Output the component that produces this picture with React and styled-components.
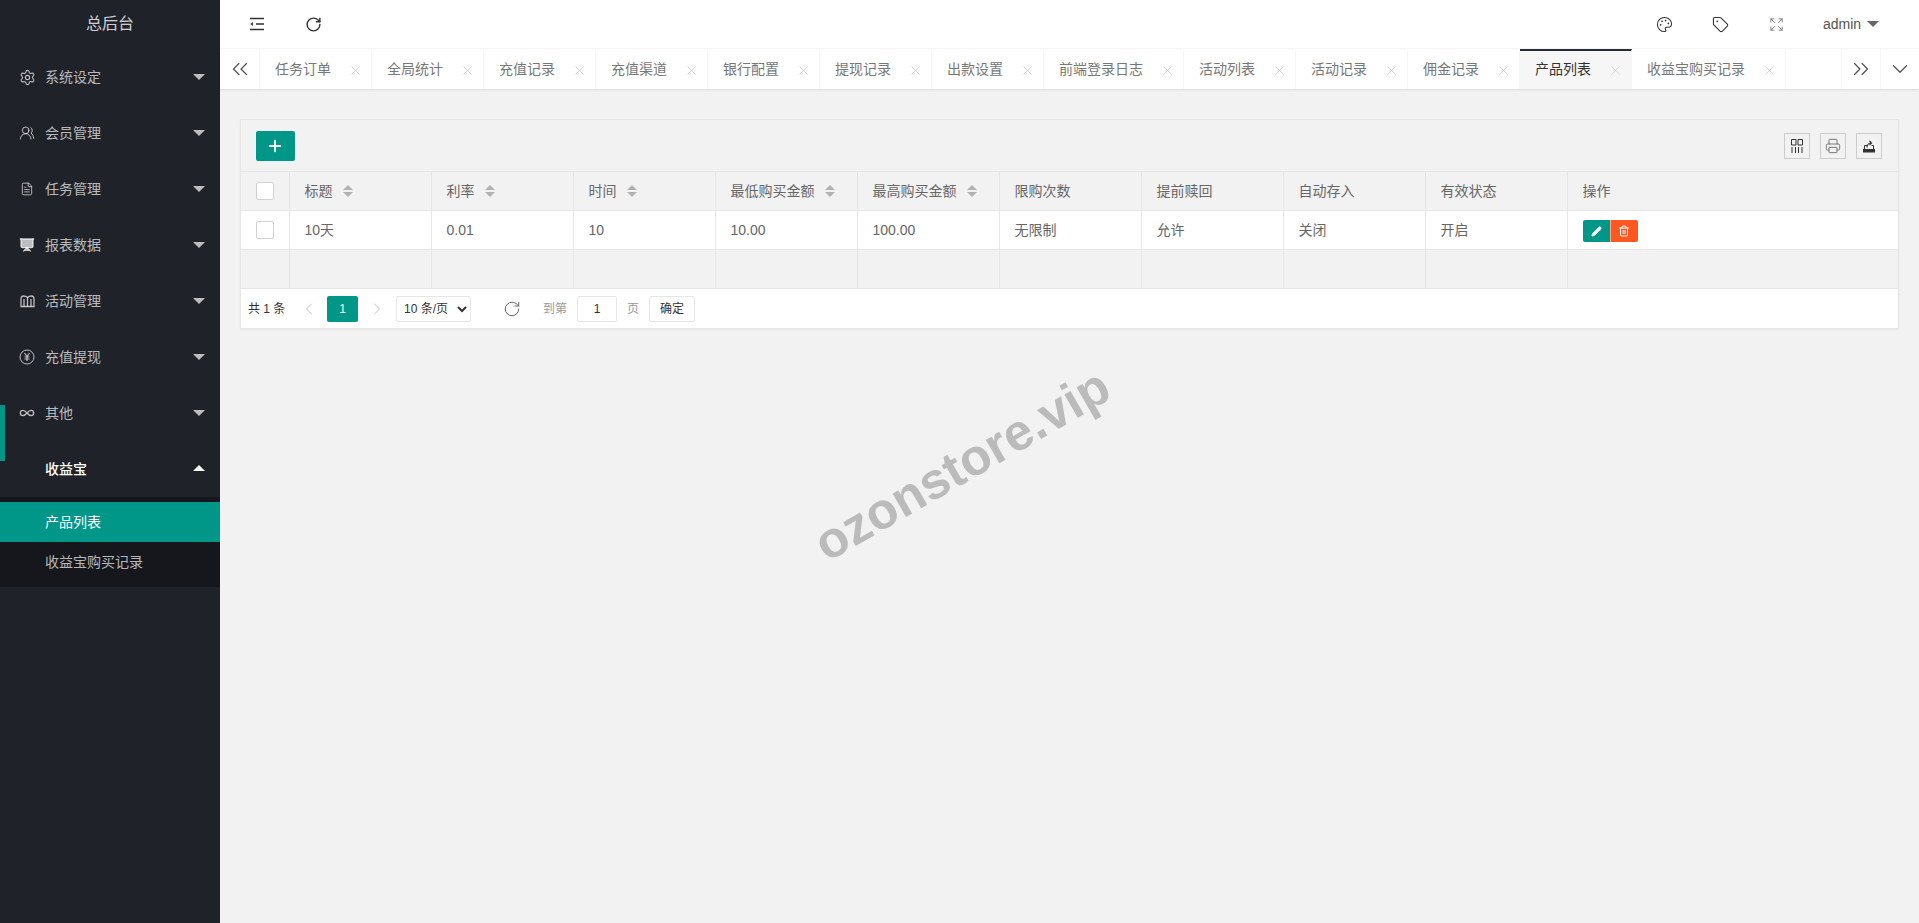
import React from "react";
import styled, { createGlobalStyle } from "styled-components";
import {
  ChevronDown,
  ChevronLeft,
  ChevronRight,
  ChevronsLeft,
  ChevronsRight,
  Expand,
  FileText,
  Infinity as InfinityIcon,
  Palette,
  Pencil,
  Plus,
  Presentation,
  Printer,
  RotateCw,
  Settings,
  Tag,
  Trash2,
  UsersRound,
  X,
} from "lucide-react";

const menus = [
  { label: "系统设定", icon: <Settings size={17} strokeWidth={1.6} /> },
  { label: "会员管理", icon: <UsersRound size={16} strokeWidth={1.5} /> },
  { label: "任务管理", icon: <FileText size={14} strokeWidth={1.6} /> },
  { label: "报表数据", icon: <Presentation size={16} strokeWidth={2} fill="currentColor" /> },
  { label: "活动管理", icon: <ReadIcon /> },
  { label: "充值提现", icon: <YenIcon /> },
  { label: "其他", icon: <InfinityIcon size={16} strokeWidth={2} />, marked: true },
];

const tabs = [
  "任务订单",
  "全局统计",
  "充值记录",
  "充值渠道",
  "银行配置",
  "提现记录",
  "出款设置",
  "前端登录日志",
  "活动列表",
  "活动记录",
  "佣金记录",
  "产品列表",
  "收益宝购买记录",
];

const columns = [
  { title: "标题", sort: true },
  { title: "利率", sort: true },
  { title: "时间", sort: true },
  { title: "最低购买金额", sort: true },
  { title: "最高购买金额", sort: true },
  { title: "限购次数" },
  { title: "提前赎回" },
  { title: "自动存入" },
  { title: "有效状态" },
];

const row = ["10天", "0.01", "10", "10.00", "100.00", "无限制", "允许", "关闭", "开启"];

function ReadIcon() {
  return (
    <svg width="15" height="13" viewBox="0 0 15 13" fill="none" stroke="currentColor" strokeWidth="1.3">
      <path d="M1 11.500V4c0-2 1-3 2.500-3s3 .5 4 1.500c1-1 2.500-1.500 4-1.500S14 2 14 4v7.500H1z" />
      <path d="M7.500 2.500v9M4 4v7.500M11 4v7.500" />
    </svg>
  );
}

function YenIcon() {
  return (
    <svg width="16" height="16" viewBox="0 0 16 16" fill="none" stroke="currentColor">
      <circle cx="8" cy="8" r="7" strokeWidth="1" />
      <path d="M5.500 4l2.500 3.500L10.500 4M8 7.500V12M5.500 8h5M5.500 10h5" strokeWidth="1.200" />
    </svg>
  );
}

function ColumnsIcon() {
  return (
    <svg width="14" height="14" viewBox="0 0 14 14" fill="none" stroke="#333" strokeWidth="1">
      <path d="M1.500 .5H6v5.500H1.500zM8 .5h4.500v5.500H8zM2 8v6M5.500 8v6M8.500 8v6M12 8v6" />
    </svg>
  );
}

function ExportIcon() {
  return (
    <svg width="14" height="14" viewBox="0 0 14 14">
      <path d="M1 10h12v3.500H1z" fill="#333" />
      <path d="M2.500 10V6.500H5M9.500 6.500h2V10" fill="none" stroke="#333" strokeWidth="1" />
      <path d="M5 8.500c0-2.500 1.500-4.500 4-4.500M7.500 2l2 2-2 2" fill="none" stroke="#333" strokeWidth="1.200" />
    </svg>
  );
}

function IndentIcon() {
  return (
    <svg width="16" height="14" viewBox="0 0 16 14" fill="none" stroke="#333" strokeWidth="1.300">
      <path d="M1 1.500h14M7 7h8M1 12.500h14" />
      <path d="M4 5v4L1.500 7z" fill="#333" stroke="none" />
    </svg>
  );
}

export default function App() {
  return (
    <Layout>
      <GlobalStyle />
      <Sidebar>
        <Logo>总后台</Logo>
        <nav>
          {menus.map((menu) => (
            <MenuItem key={menu.label} $marked={menu.marked}>
              <MenuIcon>{menu.icon}</MenuIcon>
              {menu.label}
              <Caret />
            </MenuItem>
          ))}
          <MenuItem $open>
            <MenuIcon />
            收益宝
            <Caret $up />
          </MenuItem>
          <SubMenu>
            <SubItem $active>产品列表</SubItem>
            <SubItem>收益宝购买记录</SubItem>
          </SubMenu>
        </nav>
      </Sidebar>

      <Main>
        <Header>
          <HeaderGroup>
            <HeaderButton>
              <IndentIcon />
            </HeaderButton>
            <HeaderButton>
              <RotateCw size={17} strokeWidth={2} />
            </HeaderButton>
          </HeaderGroup>
          <HeaderGroup>
            <HeaderButton>
              <Palette size={17} strokeWidth={1.5} />
            </HeaderButton>
            <HeaderButton>
              <Tag size={17} strokeWidth={1.5} />
            </HeaderButton>
            <HeaderButton $light>
              <Expand size={15} strokeWidth={1.5} />
            </HeaderButton>
            <UserName>
              admin
              <UserCaret />
            </UserName>
          </HeaderGroup>
        </Header>

        <TabBar>
          <TabArrow>
            <ChevronsLeft size={26} strokeWidth={1.2} />
          </TabArrow>
          <TabList>
            {tabs.map((tab) => (
              <Tab key={tab} $active={tab === "产品列表"}>
                {tab}
                <TabClose>
                  <X size={15} strokeWidth={1.2} />
                </TabClose>
              </Tab>
            ))}
          </TabList>
          <TabArrow $bordered>
            <ChevronsRight size={26} strokeWidth={1.2} />
          </TabArrow>
          <TabArrow $bordered>
            <ChevronDown size={26} strokeWidth={1.2} />
          </TabArrow>
        </TabBar>

        <Content>
          <Card>
            <Toolbar>
              <AddButton>
                <Plus size={18} strokeWidth={2.5} />
              </AddButton>
              <ToolGroup>
                <ToolButton>
                  <ColumnsIcon />
                </ToolButton>
                <ToolButton>
                  <Printer size={16} strokeWidth={1.5} />
                </ToolButton>
                <ToolButton>
                  <ExportIcon />
                </ToolButton>
              </ToolGroup>
            </Toolbar>

            <Table>
              <colgroup>
                <col width="48" />
                {columns.map((column) => (
                  <col key={column.title} width="142" />
                ))}
                <col />
              </colgroup>
              <thead>
                <tr>
                  <Th>
                    <CheckBox />
                  </Th>
                  {columns.map((column) => (
                    <Th key={column.title}>
                      <CellText>
                        {column.title}
                        {column.sort && <SortIcon />}
                      </CellText>
                    </Th>
                  ))}
                  <Th>
                    <CellText>操作</CellText>
                  </Th>
                </tr>
              </thead>
              <tbody>
                <BodyRow>
                  <Td>
                    <CheckBox />
                  </Td>
                  {row.map((value) => (
                    <Td key={value}>
                      <CellText>{value}</CellText>
                    </Td>
                  ))}
                  <Td>
                    <CellText>
                      <ActionButton $color="#009688">
                        <Pencil size={11} strokeWidth={2} fill="currentColor" />
                      </ActionButton>
                      <ActionButton $color="#ff5722">
                        <Trash2 size={12} strokeWidth={2} />
                      </ActionButton>
                    </CellText>
                  </Td>
                </BodyRow>
                <tr>
                  {Array.from({ length: 11 }, (_, i) => (
                    <Td key={i} />
                  ))}
                </tr>
              </tbody>
            </Table>

            <Pager>
              <PagerText>共 1 条</PagerText>
              <PagerArrow>
                <ChevronLeft size={20} strokeWidth={1.2} />
              </PagerArrow>
              <PageNumber>1</PageNumber>
              <PagerArrow>
                <ChevronRight size={20} strokeWidth={1.2} />
              </PagerArrow>
              <PageSize defaultValue="10">
                <option value="10">10 条/页</option>
              </PageSize>
              <PagerRefresh>
                <RotateCw size={18} strokeWidth={1.2} />
              </PagerRefresh>
              <PagerHint>到第</PagerHint>
              <PageInput defaultValue="1" />
              <PagerHint>页</PagerHint>
              <PageSubmit>确定</PageSubmit>
            </Pager>
          </Card>
          <Watermark>ozonstore.vip</Watermark>
        </Content>
      </Main>
    </Layout>
  );
}

const GlobalStyle = createGlobalStyle`
  html, body {
    margin: 0;
    height: 100%;
    background: #f2f2f2;
  }
  * {
    box-sizing: border-box;
  }
  body {
    font: 14px/20px "Liberation Sans", "Noto Sans CJK SC", sans-serif;
    color: #666;
  }
`;

const Layout = styled.div`
  display: flex;
  height: 100vh;
  overflow: hidden;
`;

const Sidebar = styled.aside`
  flex: 0 0 220px;
  background: #20222a;
  color: rgba(255, 255, 255, 0.7);
`;

const Logo = styled.div`
  height: 49px;
  line-height: 48px;
  text-align: center;
  font-size: 16px;
  color: rgba(255, 255, 255, 0.8);
`;

const MenuItem = styled.div`
  position: relative;
  display: flex;
  align-items: center;
  height: 56px;
  padding-left: 20px;
  color: ${(p) => (p.$open ? "#fff" : "rgba(255, 255, 255, 0.7)")};
  font-weight: ${(p) => (p.$open ? 500 : "normal")};
  ${(p) =>
    p.$marked &&
    `&::before {
      content: "";
      position: absolute;
      left: 0;
      top: 20px;
      bottom: -20px;
      width: 5px;
      background: #009688;
    }`}
`;

const MenuIcon = styled.span`
  display: flex;
  justify-content: center;
  width: 14px;
  margin-right: 11px;
  svg {
    flex: none;
  }
`;

const Caret = styled.span`
  position: absolute;
  right: 15px;
  top: 50%;
  margin-top: ${(p) => (p.$up ? "-4px" : "-3px")};
  border: 6px solid transparent;
  border-bottom-width: ${(p) => (p.$up ? "6px" : "0")};
  border-top-width: ${(p) => (p.$up ? "0" : "6px")};
  border-top-color: ${(p) => (p.$up ? "transparent" : "rgba(255, 255, 255, 0.7)")};
  border-bottom-color: ${(p) => (p.$up ? "#fff" : "transparent")};
`;

const SubMenu = styled.div`
  padding: 5px 0;
  background: rgba(0, 0, 0, 0.3);
`;

const SubItem = styled.div`
  height: 40px;
  line-height: 40px;
  padding-left: 45px;
  color: ${(p) => (p.$active ? "#fff" : "rgba(255, 255, 255, 0.7)")};
  background: ${(p) => (p.$active ? "#009688" : "transparent")};
`;

const Main = styled.main`
  flex: 1;
  min-width: 0;
  display: flex;
  flex-direction: column;
  position: relative;
`;

const Header = styled.header`
  display: flex;
  justify-content: space-between;
  align-items: center;
  height: 49px;
  padding: 0 10px 0 9px;
  background: #fff;
  border-bottom: 1px solid #f6f6f6;
`;

const HeaderGroup = styled.div`
  display: flex;
  align-items: center;
`;

const HeaderButton = styled.div`
  display: flex;
  justify-content: center;
  align-items: center;
  width: 56px;
  height: 48px;
  color: ${(p) => (p.$light ? "#777" : "#333")};
`;

const UserName = styled.div`
  display: flex;
  align-items: center;
  width: 105px;
  padding-left: 19px;
  color: #555;
`;

const UserCaret = styled.span`
  margin-left: 6px;
  border: 6px solid transparent;
  border-top-color: #666;
  border-bottom-width: 0;
`;

const TabBar = styled.div`
  display: flex;
  height: 40px;
  background: #fff;
  box-shadow: 0 1px 2px 0 rgba(0, 0, 0, 0.1);
  position: relative;
`;

const TabArrow = styled.div`
  flex: 0 0 39px;
  display: flex;
  justify-content: center;
  align-items: center;
  color: #555;
  border-left: ${(p) => (p.$bordered ? "1px solid #f6f6f6" : "0")};
`;

const TabList = styled.div`
  flex: 1;
  display: flex;
  min-width: 0;
  border-left: 1px solid #f6f6f6;
`;

const Tab = styled.div`
  display: flex;
  align-items: center;
  height: 40px;
  padding: 0 0 2px 15px;
  border-right: 1px solid #f6f6f6;
  border-top: 2px solid ${(p) => (p.$active ? "#292b34" : "transparent")};
  background: ${(p) => (p.$active ? "#f6f6f6" : "#fff")};
  color: ${(p) => (p.$active ? "#333" : "#777")};
  white-space: nowrap;
`;

const TabClose = styled.span`
  display: flex;
  justify-content: center;
  width: 40px;
  margin-top: 2px;
  padding-left: 8px;
  color: #ccc;
`;

const Content = styled.div`
  flex: 1;
  padding: 30px 20px;
  background: #f2f2f2;
`;

const Card = styled.section`
  border: 1px solid #e6e6e6;
  border-bottom: 0;
  box-shadow: 0 1px 2px 0 rgba(0, 0, 0, 0.05);
`;

const Toolbar = styled.div`
  display: flex;
  justify-content: space-between;
  align-items: center;
  height: 51px;
  padding: 0 16px 0 15px;
`;

const AddButton = styled.div`
  display: flex;
  justify-content: center;
  align-items: center;
  width: 39px;
  height: 30px;
  padding-right: 2px;
  border-radius: 2px;
  color: #fff;
  background: #009688;
`;

const ToolGroup = styled.div`
  display: flex;
  gap: 10px;
`;

const ToolButton = styled.div`
  display: flex;
  justify-content: center;
  align-items: center;
  width: 26px;
  height: 26px;
  border: 1px solid #ccc;
  color: #777;
`;

const Table = styled.table`
  width: 100%;
  table-layout: fixed;
  border-collapse: collapse;
`;

const Th = styled.th`
  height: 39px;
  padding: 0 0 0 15px;
  border: 1px solid #e6e6e6;
  border-left: 0;
  font-weight: normal;
  text-align: left;
  &:last-child {
    border-right: 0;
  }
`;

const Td = styled.td`
  height: 39px;
  padding: 0 0 0 15px;
  border: 1px solid #e6e6e6;
  border-left: 0;
  &:last-child {
    border-right: 0;
  }
`;

const BodyRow = styled.tr`
  background: #fff;
`;

const CellText = styled.div`
  display: flex;
  align-items: center;
`;

const SortIcon = styled.span`
  position: relative;
  display: inline-block;
  width: 10px;
  height: 12px;
  margin-left: 10px;
  &::before,
  &::after {
    content: "";
    position: absolute;
    left: 0;
    border: 5px solid transparent;
  }
  &::before {
    top: 0;
    border-top-width: 0;
    border-bottom-color: #b2b2b2;
  }
  &::after {
    bottom: 0;
    border-bottom-width: 0;
    border-top-color: #b2b2b2;
  }
`;

const CheckBox = styled.span`
  display: block;
  width: 18px;
  height: 18px;
  border: 1px solid #d2d2d2;
  border-radius: 2px;
  background: #fff;
`;

const ActionButton = styled.span`
  display: flex;
  justify-content: center;
  align-items: center;
  width: 27.5px;
  height: 22px;
  margin-top: 2px;
  color: #fff;
  background: ${(p) => p.$color};
  &:first-child {
    border-radius: 2px 0 0 2px;
  }
  &:last-child {
    border-radius: 0 2px 2px 0;
    border-left: 1px solid rgba(255, 255, 255, 0.5);
  }
`;

const Pager = styled.div`
  display: flex;
  align-items: center;
  height: 40px;
  padding-left: 7px;
  background: #fff;
  border-bottom: 1px solid #e6e6e6;
  font-size: 12px;
  color: #333;
`;

const PagerText = styled.span`
  width: 42px;
`;

const PagerArrow = styled.span`
  display: flex;
  justify-content: center;
  width: 37px;
  color: #c2c2c2;
`;

const PageNumber = styled.span`
  width: 31px;
  height: 26px;
  line-height: 26px;
  text-align: center;
  border-radius: 2px;
  color: #fff;
  background: #009688;
`;

const PageSize = styled.select`
  width: 75px;
  height: 26px;
  margin-left: 1px;
  padding: 0 0 0 3px;
  border: 1px solid #e6e6e6;
  border-radius: 2px;
  background: #fff;
  color: #333;
  font: inherit;
`;

const PagerRefresh = styled.span`
  display: flex;
  margin: 0 22px 0 32px;
  color: #555;
`;

const PagerHint = styled.span`
  margin-right: 10px;
  color: #999;
`;

const PageInput = styled.input`
  width: 40px;
  height: 26px;
  margin-right: 10px;
  border: 1px solid #e6e6e6;
  border-radius: 2px;
  text-align: center;
  font: inherit;
  color: #333;
`;

const PageSubmit = styled.span`
  width: 46px;
  height: 26px;
  line-height: 24px;
  text-align: center;
  border: 1px solid #e6e6e6;
  border-radius: 2px;
  background: #fff;
  color: #333;
`;

const Watermark = styled.div`
  position: absolute;
  left: 742px;
  top: 465px;
  transform: translate(-50%, -50%) rotate(-30deg);
  font-size: 51px;
  line-height: 60px;
  font-weight: bold;
  color: #bbb;
  white-space: nowrap;
  pointer-events: none;
`;
